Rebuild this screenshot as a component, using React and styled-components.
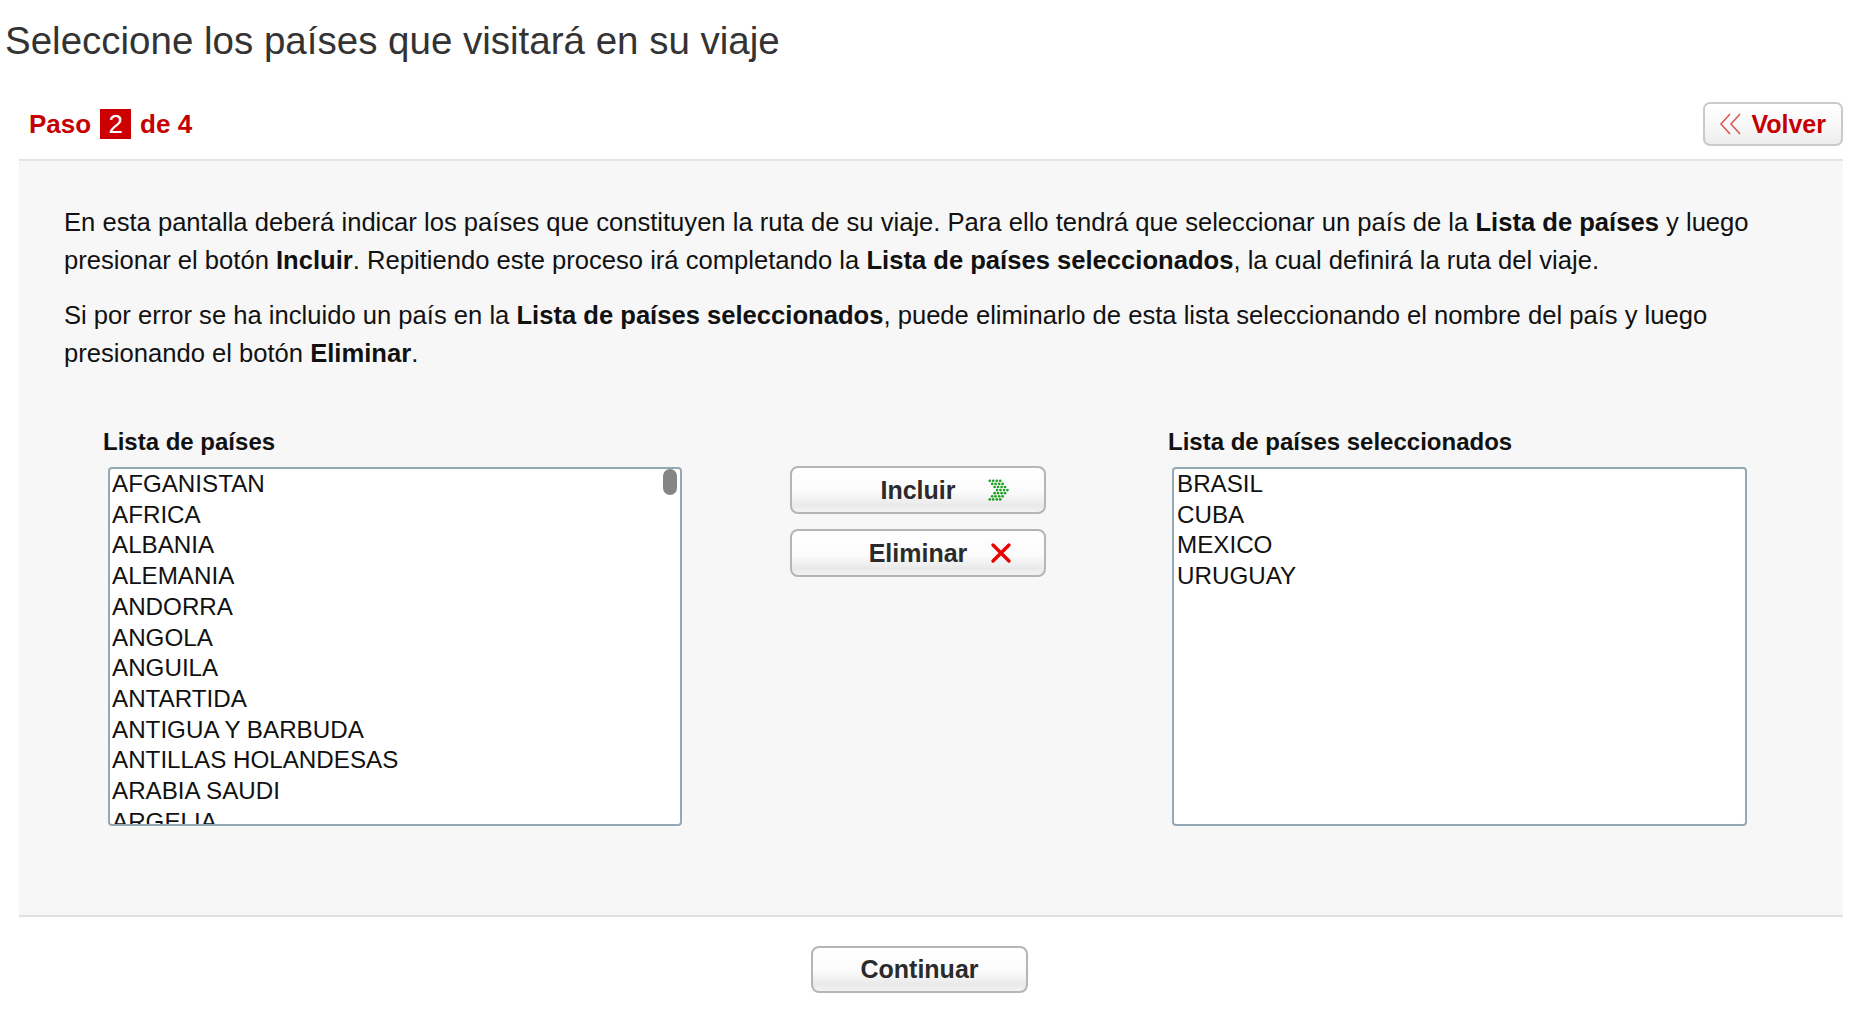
import React from 'react';
import styled, { createGlobalStyle } from 'styled-components';

const GlobalStyle = createGlobalStyle`
  body {
    margin: 0;
    background: #ffffff;
    font-family: "Liberation Sans", Arial, Helvetica, sans-serif;
    color: #111;
  }
`;

const countries = [
  'AFGANISTAN', 'AFRICA', 'ALBANIA', 'ALEMANIA', 'ANDORRA', 'ANGOLA', 'ANGUILA', 'ANTARTIDA',
  'ANTIGUA Y BARBUDA', 'ANTILLAS HOLANDESAS', 'ARABIA SAUDI', 'ARGELIA', 'ARGENTINA', 'ARMENIA',
  'ARUBA', 'ASIA', 'AUSTRALIA', 'AUSTRIA', 'AZERBAIYAN', 'BAHAMAS', 'BAHREIN', 'BANGLADESH',
  'BARBADOS', 'BELGICA', 'BELICE', 'BENIN', 'BERMUDAS', 'BIELORRUSIA', 'BOLIVIA',
  'BOSNIA Y HERZEGOVINA', 'BOTSWANA', 'BRUNEI', 'BULGARIA', 'BURKINA FASO', 'BURUNDI', 'BUTAN',
  'CABO VERDE', 'CAMBOYA', 'CAMERUN', 'CANADA', 'CHAD', 'CHILE', 'CHINA', 'CHIPRE', 'COLOMBIA',
  'COMORES', 'CONGO', 'COREA DEL NORTE', 'COREA DEL SUR', 'COSTA DE MARFIL', 'COSTA RICA',
  'CROACIA', 'DINAMARCA', 'DOMINICA', 'ECUADOR', 'EGIPTO', 'EL SALVADOR', 'EMIRATOS ARABES UNIDOS',
  'ERITREA', 'ESLOVAQUIA', 'ESLOVENIA', 'ESPAÑA', 'ESTADOS UNIDOS', 'ESTONIA', 'ETIOPIA', 'EUROPA',
  'FILIPINAS', 'FINLANDIA', 'FIYI', 'FRANCIA', 'GABON', 'GAMBIA', 'GEORGIA', 'GHANA', 'GIBRALTAR',
  'GRANADA', 'GRECIA', 'GROENLANDIA', 'GUADALUPE', 'GUAM', 'GUATEMALA', 'GUAYANA FRANCESA', 'GUINEA',
  'GUINEA ECUATORIAL', 'GUINEA-BISSAU', 'GUYANA', 'HAITI', 'HONDURAS', 'HONG KONG', 'HUNGRIA',
  'INDIA', 'INDONESIA', 'IRAK', 'IRAN', 'IRLANDA', 'ISLANDIA', 'ISLAS CAIMAN', 'ISLAS COOK',
  'ISLAS MALVINAS', 'ISRAEL', 'ITALIA', 'JAMAICA', 'JAPON', 'JORDANIA', 'KAZAJSTAN', 'KENIA',
  'KIRGUISTAN', 'KIRIBATI', 'KUWAIT', 'LAOS', 'LESOTHO', 'LETONIA', 'LIBANO', 'LIBERIA', 'LIBIA',
  'LIECHTENSTEIN', 'LITUANIA', 'LUXEMBURGO', 'MACAO', 'MACEDONIA', 'MADAGASCAR', 'MALASIA',
  'MALAWI', 'MALDIVAS', 'MALI', 'MALTA', 'MARRUECOS', 'MARTINICA', 'MAURICIO', 'MAURITANIA',
  'MOLDAVIA', 'MONACO', 'MONGOLIA', 'MONTENEGRO', 'MOZAMBIQUE', 'NAMIBIA', 'NEPAL', 'NICARAGUA',
  'NIGER', 'NIGERIA', 'NORUEGA', 'NUEVA ZELANDA', 'OCEANIA', 'OMAN', 'PAISES BAJOS', 'PAKISTAN',
  'PANAMA', 'PAPUA NUEVA GUINEA', 'PARAGUAY', 'PERU', 'POLONIA', 'PORTUGAL', 'PUERTO RICO', 'QATAR',
  'REINO UNIDO', 'REPUBLICA CHECA', 'REPUBLICA DOMINICANA', 'RUANDA', 'RUMANIA', 'RUSIA', 'SENEGAL',
  'SERBIA', 'SINGAPUR', 'SIRIA', 'SOMALIA', 'SRI LANKA', 'SUDAFRICA', 'SUDAN', 'SUECIA', 'SUIZA',
  'SURINAM', 'TAILANDIA', 'TAIWAN', 'TANZANIA', 'TOGO', 'TRINIDAD Y TOBAGO', 'TUNEZ', 'TURQUIA',
  'UCRANIA', 'UGANDA', 'UZBEKISTAN', 'VENEZUELA', 'VIETNAM', 'YEMEN', 'ZAMBIA', 'ZIMBABUE'
];

const selected = ['BRASIL', 'CUBA', 'MEXICO', 'URUGUAY'];

const Title = styled.h1`
  margin: 0;
  padding: 19px 0 0 5px;
  font-size: 38.5px;
  line-height: 44px;
  font-weight: normal;
  color: #333;
`;

const Main = styled.div`
  margin: 39px 31px 0 19px;
`;

const StepBar = styled.div`
  display: flex;
  justify-content: space-between;
  align-items: center;
  padding: 0 0 13px 10px;
  border-bottom: 2px solid #e3e3e3;
`;

const Step = styled.div`
  font-size: 26px;
  font-weight: bold;
  color: #c40000;
`;

const StepNumber = styled.span`
  display: inline-block;
  margin: 0 2px;
  padding: 0 8px;
  line-height: 30px;
  background: #cc0000;
  color: #fff;
  font-weight: normal;
`;

const BackButton = styled.button`
  display: flex;
  align-items: center;
  gap: 8px;
  height: 44px;
  padding: 0 15px 0 14px;
  border: 2px solid #c9c9c9;
  border-radius: 7px;
  background: linear-gradient(#ffffff, #f7f7f7 60%, #ececec);
  color: #c40000;
  font-family: inherit;
  font-size: 25px;
  font-weight: bold;
`;

const Panel = styled.div`
  background: #f7f7f7;
  padding: 42px 60px 89px 45px;
  border-bottom: 2px solid #e0e0e0;
`;

const Intro = styled.p`
  margin: 0 0 17px;
  font-size: 25.6px;
  line-height: 38px;
  color: #111;

  &:last-of-type {
    margin-bottom: 0;
  }
`;

const ListsRow = styled.div`
  display: flex;
  align-items: flex-start;
  margin-top: 56px;
  padding-left: 39px;
`;

const ListColumn = styled.div`
  display: flex;
  flex-direction: column;
`;

const ListLabel = styled.div`
  font-size: 24px;
  line-height: 28px;
  font-weight: bold;
  color: #111;
  margin-bottom: 11px;
`;

const ListFrame = styled.div`
  position: relative;
  margin-left: ${p => p.$offset}px;
  width: ${p => p.$width}px;
  height: 359px;
  box-sizing: border-box;
  border: 2px solid #93a9b3;
  border-radius: 4px;
  background: #fff;
  overflow: hidden;
`;

const ListScroll = styled.div`
  height: 100%;
  overflow-y: auto;
  scrollbar-width: none;

  &::-webkit-scrollbar {
    display: none;
  }
`;

const ScrollThumb = styled.div`
  position: absolute;
  top: 0;
  right: 3px;
  width: 14px;
  height: 26px;
  border-radius: 7px;
  background: #858585;
`;

const ListItem = styled.div`
  padding-left: ${p => p.$indent}px;
  font-size: 24.2px;
  line-height: 30.7px;
  color: #111;
  white-space: nowrap;
`;

const Actions = styled.div`
  display: flex;
  flex-direction: column;
  gap: 15px;
  margin: 0 122px 0 108px;
  padding-top: 38px;
`;

const ActionButton = styled.button`
  position: relative;
  width: ${p => p.$width}px;
  height: ${p => p.$height}px;
  border: 2px solid #b5b5b5;
  border-radius: 8px;
  background: linear-gradient(#ffffff, #fbfbfb 55%, #e9e9e9 85%, #f3f3f3);
  color: #2b2b2b;
  font-family: inherit;
  font-size: 25px;
  font-weight: bold;
  text-align: center;
  padding: 0;
`;

const ButtonIcon = styled.span`
  position: absolute;
  right: 32px;
  top: 50%;
  transform: translateY(-50%);
  display: flex;
`;

const Footer = styled.div`
  display: flex;
  justify-content: center;
  padding: 29px 23px 0 0;
`;

const BackIcon = () => (
  <svg width="24" height="22" viewBox="0 0 24 22">
    <polyline points="11,1 2,11 11,21" fill="none" stroke="#d85a5a" strokeWidth="1.6" />
    <polyline points="21,1 12,11 21,21" fill="none" stroke="#d85a5a" strokeWidth="1.6" />
  </svg>
);

// two dotted chevrons, each two dots thick
const dots = [];
[0, 7].forEach(ox => {
  [0, 1, 2, 3, 4, 5, 6].forEach(r => {
    const d = 3 - Math.abs(r - 3);
    const y = 1.8 + r * 3.1;
    dots.push([ox + 1.8 + d * 2.4, y]);
    dots.push([ox + 5.2 + d * 2.4, y]);
  });
});

const IncludeIcon = () => (
  <svg width="24" height="22" viewBox="0 0 24 22">
    {dots.map(([x, y], i) => (
      <circle key={i} cx={x} cy={y} r="1.35" fill="#22a026" />
    ))}
  </svg>
);

const RemoveIcon = () => (
  <svg width="22" height="22" viewBox="0 0 22 22">
    <path d="M3 3 L19 19 M19 3 L3 19" stroke="#e80000" strokeWidth="3.4" strokeLinecap="round" />
  </svg>
);

export default function App() {
  return (
    <>
      <GlobalStyle />
      <Title>Seleccione los países que visitará en su viaje</Title>
      <Main>
        <StepBar>
          <Step>
            Paso <StepNumber>2</StepNumber> de 4
          </Step>
          <BackButton>
            <BackIcon />
            Volver
          </BackButton>
        </StepBar>
        <Panel>
          <Intro>
            En esta pantalla deberá indicar los países que constituyen la ruta de su viaje. Para ello tendrá que
            seleccionar un país de la <b>Lista de países</b> y luego presionar el botón <b>Incluir</b>. Repitiendo
            este proceso irá completando la <b>Lista de países seleccionados</b>, la cual definirá la ruta del viaje.
          </Intro>
          <Intro>
            Si por error se ha incluido un país en la <b>Lista de países seleccionados</b>, puede eliminarlo de esta
            lista seleccionando el nombre del país y luego presionando el botón <b>Eliminar</b>.
          </Intro>
          <ListsRow>
            <ListColumn>
              <ListLabel>Lista de países</ListLabel>
              <ListFrame $offset={5} $width={574}>
                <ListScroll>
                  {countries.map(c => (
                    <ListItem key={c} $indent={2}>{c}</ListItem>
                  ))}
                </ListScroll>
                <ScrollThumb />
              </ListFrame>
            </ListColumn>
            <Actions>
              <ActionButton $width={256} $height={48}>
                Incluir
                <ButtonIcon><IncludeIcon /></ButtonIcon>
              </ActionButton>
              <ActionButton $width={256} $height={48}>
                Eliminar
                <ButtonIcon><RemoveIcon /></ButtonIcon>
              </ActionButton>
            </Actions>
            <ListColumn>
              <ListLabel>Lista de países seleccionados</ListLabel>
              <ListFrame $offset={4} $width={575}>
                <ListScroll>
                  {selected.map(c => (
                    <ListItem key={c} $indent={3}>{c}</ListItem>
                  ))}
                </ListScroll>
              </ListFrame>
            </ListColumn>
          </ListsRow>
        </Panel>
        <Footer>
          <ActionButton $width={217} $height={47}>Continuar</ActionButton>
        </Footer>
      </Main>
    </>
  );
}
